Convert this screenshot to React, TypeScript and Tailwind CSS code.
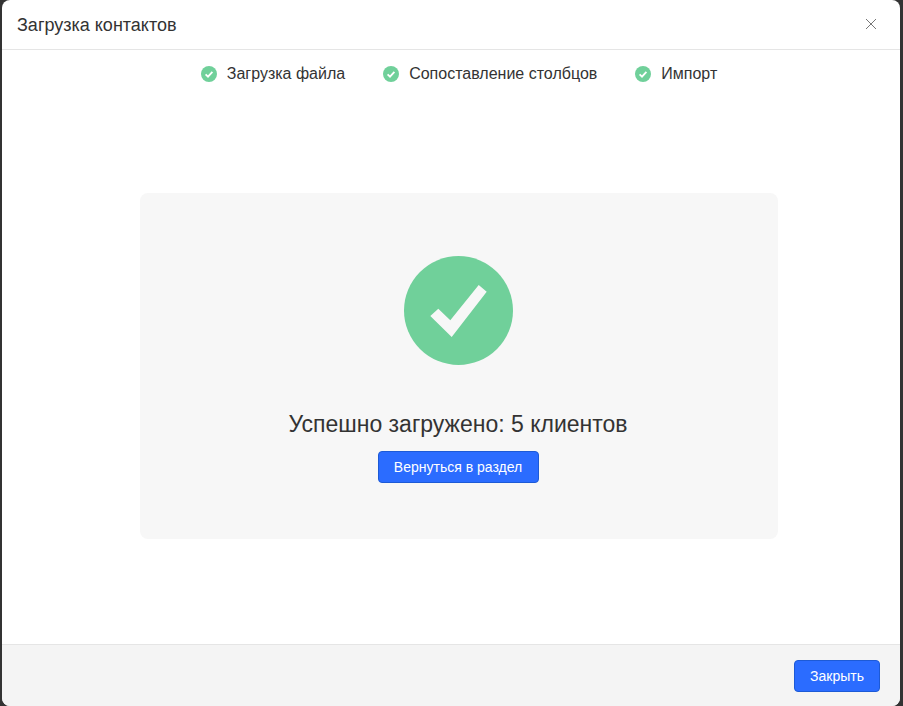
const steps = ["Загрузка файла", "Сопоставление столбцов", "Импорт"];

function StepCheck() {
  return (
    <svg width="16" height="16" viewBox="0 0 16 16" className="shrink-0">
      <circle cx="8" cy="8" r="8" fill="#70d09a" />
      <path d="M4.6 8.3 L7 10.6 L11.4 5.8" fill="none" stroke="#ffffff" strokeWidth="1.8" />
    </svg>
  );
}

export default function App() {
  return (
    <div className="h-[706px] w-[903px] overflow-hidden bg-[#333333] pl-[2px] pr-[3px] font-['Liberation_Sans',Arial,sans-serif] text-[#333333]">
      <div className="flex h-full flex-col overflow-hidden rounded-lg bg-white">
        <div className="flex h-[50px] items-center justify-between border-b border-[#e5e5e5] pl-[15px] pr-[24px]">
          <h1 className="text-lg leading-none">Загрузка контактов</h1>
          <svg width="10" height="10" viewBox="0 0 10 10" className="mb-[1px] text-[#777777]">
            <path d="M0 0 L10 10 M10 0 L0 10" stroke="currentColor" strokeWidth="1" fill="none" />
          </svg>
        </div>

        <div className="flex h-[48px] items-center justify-center gap-[38px] pl-[16px]">
          {steps.map((step) => (
            <div key={step} className="flex items-center gap-[10px]">
              <StepCheck />
              <span className="text-base">{step}</span>
            </div>
          ))}
        </div>

        <div className="flex flex-1 items-start justify-center pl-[16px] pt-[95px]">
          <div className="flex h-[346px] w-[638px] flex-col items-center rounded-lg bg-[#f7f7f7] pr-[2px] pt-[63px]">
            <svg width="109" height="109" viewBox="0 0 109 109">
              <circle cx="54.5" cy="54.5" r="54.5" fill="#70d09a" />
              <path d="M26.3 60 L34.3 52.7 L46.3 64.3 L74.7 29 L82.7 35.7 L47.7 81 Z" fill="#f7f7f7" />
            </svg>
            <p className="mt-[44px] text-[23px] leading-[30px]">Успешно загружено: 5 клиентов</p>
            <button className="mt-[12px] h-[32px] w-[161px] rounded-[4px] border border-[#1d5ad6] bg-[#2b6cff] text-sm text-white">
              Вернуться в раздел
            </button>
          </div>
        </div>

        <div className="flex h-[62px] items-center justify-end border-t border-[#e5e5e5] bg-[#f4f4f4] pr-[20px]">
          <button className="h-[32px] w-[86px] rounded-[4px] border border-[#1d5ad6] bg-[#2b6cff] text-sm text-white">
            Закрыть
          </button>
        </div>
      </div>
    </div>
  );
}
